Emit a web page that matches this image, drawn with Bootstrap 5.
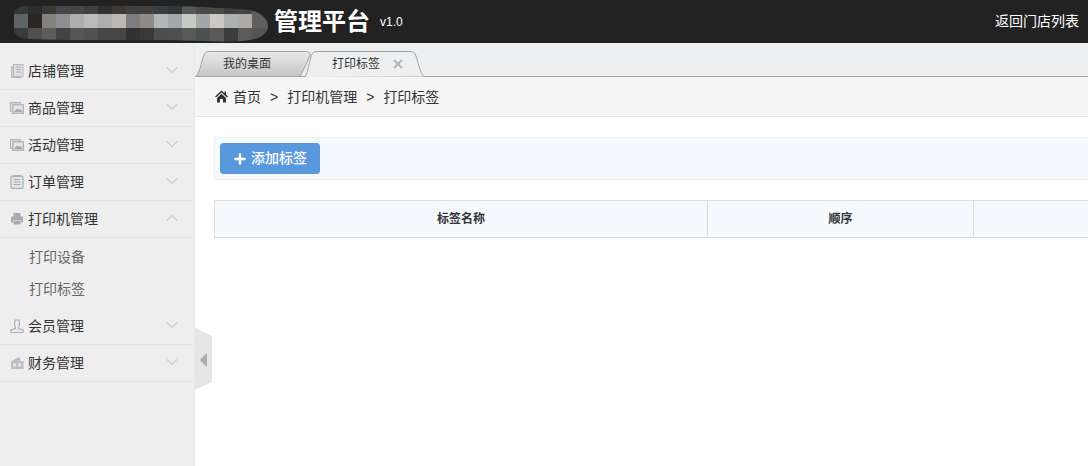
<!DOCTYPE html>
<html lang="zh-CN">
<head>
<meta charset="utf-8">
<title>打印标签</title>
<link href="https://cdn.jsdelivr.net/npm/bootstrap@5.3.0/dist/css/bootstrap.min.css" rel="stylesheet">
<style>
html,body{height:100%;overflow:hidden}
body{font-family:"Liberation Sans","Noto Sans CJK SC",sans-serif;font-size:14px;color:#333;background:#fff}
.shell{width:1088px;height:466px;overflow:hidden;position:relative}
.topbar{height:43px;background:#222;color:#fff}
.logo-mosaic{display:block;width:254px;height:36px;margin-left:14px;margin-top:6px;flex:none;align-self:flex-start}
.brand-name{font-size:24px;font-weight:700;margin-left:6px;line-height:1;color:#fff}
.brand-ver{font-size:12px;margin-left:10px;color:#fff}
.back-link{margin-left:auto;margin-right:9px;color:#fff;text-decoration:none;font-size:14px}
.work{height:423px}
.side{width:195px;flex:none;background:#eee;padding-top:10px;border-right:1px solid #e8e8e8}
.side-row{height:37px;border-bottom:1px solid #e3e3e3;padding-left:10px;padding-right:16px;color:#333;text-decoration:none}
.side-ico{width:14px;height:14px;flex:none;margin-right:4px;display:block}
.side-chev{width:12px;height:8px;margin-left:auto;margin-top:-2px;display:block}
.side-sub{height:32px;padding-left:29px;color:#666;text-decoration:none}
.sub-list{padding-top:3px;padding-bottom:3px}
.side-flap{position:absolute;left:195px;top:328px;width:17px;height:62px;background:#e5e5e5;clip-path:polygon(0 0,100% 8px,100% 54px,0 100%)}
.side-flap::after{content:"";position:absolute;left:5px;top:25px;border-style:solid;border-width:7px 7px 7px 0;border-color:transparent #aaa transparent transparent}
.main-pane{flex:1 1 auto;min-width:0;overflow:hidden}
.tabs-bar{height:34px;background:#eeeff1;border-bottom:1px solid #a3a3a3;position:relative}
.tab-shape{position:absolute;left:0;top:0;width:240px;height:34px;display:block}
.tab-label{position:absolute;top:13px;font-size:12px;line-height:16px;color:#333}
.tab-one{left:28px}
.tab-two{left:137px}
.tab-x{position:absolute;left:197px;top:15px;width:12px;height:12px;display:block}
.crumb-bar{height:40px;background:#f5f5f5;border-bottom:1px solid #e5e5e5;padding-left:20px;padding-top:2px}
.crumb-home{width:13px;height:13px;margin-right:5px;margin-top:-2px;display:block}
.crumb-bar .breadcrumb{--bs-breadcrumb-divider:">";--bs-breadcrumb-margin-bottom:0;--bs-breadcrumb-item-padding-x:9px;--bs-breadcrumb-divider-color:#333;--bs-breadcrumb-item-active-color:#333;font-size:14px}
.page-body{width:1200px;padding:20px 0 0 19px}
.tool-box{background:#f5fafe;border:1px solid #eee;padding:5px;margin-bottom:20px}
.add-btn{--bs-btn-bg:#5a98de;--bs-btn-border-color:#5a98de;--bs-btn-color:#fff;--bs-btn-hover-bg:#5a98de;--bs-btn-hover-border-color:#5a98de;--bs-btn-hover-color:#fff;--bs-btn-border-radius:3px;width:100px;height:31px;padding:0 0 0 13px;font-size:14px;line-height:29px;font-weight:500}
.add-ico{width:12px;height:12px;margin-right:5px;display:block}
.head-table{table-layout:fixed;border-color:#ddd;margin:0;--bs-table-bg:#f5fafe;--bs-table-border-color:#ddd;--bs-table-color:#333}
.head-table th{height:37px;padding:0;font-size:12px;font-weight:700;text-align:center;vertical-align:middle;background:#f5fafe;border:1px solid #ddd;color:#333}
.w-name{width:493px}
.w-order{width:266px}
</style>
</head>
<body>
<div class="shell">
  <header class="topbar d-flex align-items-center">
    <svg class="logo-mosaic" viewBox="0 0 254 36" xmlns="http://www.w3.org/2000/svg" aria-hidden="true">
      <defs><clipPath id="lc"><path d="M10 0H150C175 0 190 1 205 2C225 3 240 3 246 8C252 12 254 16 254 20C254 27 248 32 236 34C225 36 205 36 190 35C150 33 60 35 12 33C3 31 0 28 0 22V10C0 4 4 0 10 0Z"/></clipPath></defs>
      <g clip-path="url(#lc)" shape-rendering="crispEdges">
        <g>
          <rect x="0" y="0" width="14" height="8" fill="#33383a"/><rect x="14" y="0" width="14" height="8" fill="#2e2c2a"/><rect x="28" y="0" width="14" height="8" fill="#393836"/><rect x="42" y="0" width="14" height="8" fill="#45474a"/><rect x="56" y="0" width="14" height="8" fill="#484645"/><rect x="70" y="0" width="14" height="8" fill="#3f4042"/><rect x="84" y="0" width="14" height="8" fill="#2e3130"/><rect x="98" y="0" width="14" height="8" fill="#3b3836"/><rect x="112" y="0" width="14" height="8" fill="#3f4141"/><rect x="126" y="0" width="14" height="8" fill="#434040"/><rect x="140" y="0" width="14" height="8" fill="#3a3d40"/><rect x="154" y="0" width="14" height="8" fill="#333537"/><rect x="168" y="0" width="14" height="8" fill="#55575a"/><rect x="182" y="0" width="14" height="8" fill="#4a4a4a"/><rect x="196" y="0" width="14" height="8" fill="#4b4946"/><rect x="210" y="0" width="14" height="8" fill="#3f4040"/><rect x="224" y="0" width="14" height="8" fill="#464442"/><rect x="238" y="0" width="16" height="8" fill="#5c5d5b"/>
        </g>
        <g>
          <rect x="0" y="8" width="14" height="14" fill="#5d6468"/><rect x="14" y="8" width="14" height="14" fill="#2a2623"/><rect x="28" y="8" width="14" height="14" fill="#82837c"/><rect x="42" y="8" width="14" height="14" fill="#8b8e92"/><rect x="56" y="8" width="14" height="14" fill="#aeaeae"/><rect x="70" y="8" width="14" height="14" fill="#bcbabc"/><rect x="84" y="8" width="14" height="14" fill="#aeadae"/><rect x="98" y="8" width="14" height="14" fill="#bbb8b5"/><rect x="112" y="8" width="14" height="14" fill="#7d7e80"/><rect x="126" y="8" width="14" height="14" fill="#918b86"/><rect x="140" y="8" width="14" height="14" fill="#b2b6ba"/><rect x="154" y="8" width="14" height="14" fill="#a4a8ab"/><rect x="168" y="8" width="14" height="14" fill="#c3ccc3"/><rect x="182" y="8" width="14" height="14" fill="#a4a6a8"/><rect x="196" y="8" width="14" height="14" fill="#ccc9c5"/><rect x="210" y="8" width="14" height="14" fill="#adb2b0"/><rect x="224" y="8" width="14" height="14" fill="#aeaaa6"/><rect x="238" y="8" width="16" height="14" fill="#5f605e"/>
        </g>
        <g>
          <rect x="0" y="22" width="14" height="14" fill="#363c40"/><rect x="14" y="22" width="14" height="14" fill="#4f4f4f"/><rect x="28" y="22" width="14" height="14" fill="#5c5c5c"/><rect x="42" y="22" width="14" height="14" fill="#434341"/><rect x="56" y="22" width="14" height="14" fill="#555555"/><rect x="70" y="22" width="14" height="14" fill="#525052"/><rect x="84" y="22" width="14" height="14" fill="#484647"/><rect x="98" y="22" width="14" height="14" fill="#474546"/><rect x="112" y="22" width="14" height="14" fill="#333134"/><rect x="126" y="22" width="14" height="14" fill="#3a3837"/><rect x="140" y="22" width="14" height="14" fill="#4c4f50"/><rect x="154" y="22" width="14" height="14" fill="#4d4f51"/><rect x="168" y="22" width="14" height="14" fill="#565a5a"/><rect x="182" y="22" width="14" height="14" fill="#4f5050"/><rect x="196" y="22" width="14" height="14" fill="#5a5957"/><rect x="210" y="22" width="14" height="14" fill="#3e3d3b"/><rect x="224" y="22" width="14" height="14" fill="#5a5a5a"/><rect x="238" y="22" width="16" height="14" fill="#555653"/>
        </g>
      </g>
    </svg>
    <span class="brand-name">管理平台</span>
    <span class="brand-ver">v1.0</span>
    <a class="back-link" href="#">返回门店列表</a>
  </header>

  <div class="work d-flex">
    <aside class="side">
      <nav class="d-flex flex-column">
        <a class="side-row d-flex align-items-center" href="#">
          <svg class="side-ico" viewBox="0 0 14 14" aria-hidden="true"><path d="M3.500 2.500H1.500V13.500H11V12.500" fill="#d0d2d6" stroke="#b5b8bd"/><rect x="3.500" y="0.500" width="9.500" height="12" fill="#dfe0e3" stroke="#b5b8bd"/><path d="M6 3H11M6 5.500H11M6 8H11" stroke="#aeb1b7" stroke-width="1.200"/></svg>
          店铺管理
          <svg class="side-chev" viewBox="0 0 12 8" aria-hidden="true"><path d="M1 1.500L6 6.500L11 1.500" fill="none" stroke="#ccc" stroke-width="1.200"/></svg>
        </a>
        <a class="side-row d-flex align-items-center" href="#">
          <svg class="side-ico" viewBox="0 0 14 14" aria-hidden="true"><path d="M0 1H11V3H14V13H2V11H0Z" fill="#b4b7bc"/><rect x="3.500" y="4.500" width="9" height="7" fill="#e4e5e7"/><path d="M1 2.500H10V3H2V10H1Z" fill="#e4e5e7"/><path d="M4 11L7 7.500L9 9L10.500 8L12.500 11Z" fill="#a6a9af"/></svg>
          商品管理
          <svg class="side-chev" viewBox="0 0 12 8" aria-hidden="true"><path d="M1 1.500L6 6.500L11 1.500" fill="none" stroke="#ccc" stroke-width="1.200"/></svg>
        </a>
        <a class="side-row d-flex align-items-center" href="#">
          <svg class="side-ico" viewBox="0 0 14 14" aria-hidden="true"><path d="M0 1H11V3H14V13H2V11H0Z" fill="#b4b7bc"/><rect x="3.500" y="4.500" width="9" height="7" fill="#e4e5e7"/><path d="M1 2.500H10V3H2V10H1Z" fill="#e4e5e7"/><path d="M4 11L7 7.500L9 9L10.500 8L12.500 11Z" fill="#a6a9af"/></svg>
          活动管理
          <svg class="side-chev" viewBox="0 0 12 8" aria-hidden="true"><path d="M1 1.500L6 6.500L11 1.500" fill="none" stroke="#ccc" stroke-width="1.200"/></svg>
        </a>
        <a class="side-row d-flex align-items-center" href="#">
          <svg class="side-ico" viewBox="0 0 14 14" aria-hidden="true"><rect x="1" y="1" width="12" height="12.500" rx="1.500" fill="#e6e7e9" stroke="#aeb1b6" stroke-width="1.300"/><path d="M3.500 4.500H10.500M3.500 7H10.500M3.500 9.500H10.500" stroke="#a6a9af"/><path d="M4 1H10" stroke="#a6a9af" stroke-width="1.500"/></svg>
          订单管理
          <svg class="side-chev" viewBox="0 0 12 8" aria-hidden="true"><path d="M1 1.500L6 6.500L11 1.500" fill="none" stroke="#ccc" stroke-width="1.200"/></svg>
        </a>
        <a class="side-row d-flex align-items-center" href="#">
          <svg class="side-ico" viewBox="0 0 14 14" aria-hidden="true"><path d="M3.500 1H10.500V5H3.500Z" fill="#a8abb1"/><path d="M1 5.500Q1 4.500 2 4.500H12Q13 4.500 13 5.500V10.500H11V8.500H3V10.500H1Z" fill="#a8abb1"/><rect x="3.500" y="9" width="7" height="3.500" fill="#a8abb1"/></svg>
          打印机管理
          <svg class="side-chev" viewBox="0 0 12 8" aria-hidden="true"><path d="M1 6.500L6 1.500L11 6.500" fill="none" stroke="#ccc" stroke-width="1.200"/></svg>
        </a>
        <div class="sub-list d-flex flex-column">
          <a class="side-sub d-flex align-items-center" href="#">打印设备</a>
          <a class="side-sub d-flex align-items-center" href="#">打印标签</a>
        </div>
        <a class="side-row d-flex align-items-center" href="#">
          <svg class="side-ico" viewBox="0 0 14 14" aria-hidden="true"><path d="M5 1H9L9.500 6L8.500 8.500V9.500L13 11V13.500H1V11L5.500 9.500V8.500L4.500 6Z" fill="none" stroke="#aeb1b6" stroke-width="1.200"/></svg>
          会员管理
          <svg class="side-chev" viewBox="0 0 12 8" aria-hidden="true"><path d="M1 1.500L6 6.500L11 1.500" fill="none" stroke="#ccc" stroke-width="1.200"/></svg>
        </a>
        <a class="side-row d-flex align-items-center" href="#">
          <svg class="side-ico" viewBox="0 0 14 14" aria-hidden="true"><path d="M1 5.500L9 1L10.500 4.500Z" fill="#b4b7bc"/><rect x="1" y="5" width="12.500" height="8" fill="#bcbfc3"/><path d="M3 7.500H6V10.500H3ZM8 7.500H11V10.500H8Z" fill="#e6e7e9"/></svg>
          财务管理
          <svg class="side-chev" viewBox="0 0 12 8" aria-hidden="true"><path d="M1 1.500L6 6.500L11 1.500" fill="none" stroke="#ccc" stroke-width="1.200"/></svg>
        </a>
      </nav>
    </aside>

    <main class="main-pane">
      <div class="tabs-bar">
        <svg class="tab-shape" viewBox="0 0 240 34" aria-hidden="true">
          <defs><linearGradient id="tg" x1="0" y1="0" x2="0" y2="1"><stop offset="0" stop-color="#e9e9e9"/><stop offset="1" stop-color="#c6c6c8"/></linearGradient></defs>
          <path d="M1 33.500C5 30 7 15 9.500 11C11 8.700 12 8.500 15 8.500H110C114 8.500 115.500 10 115 12C113 18 109 26 105 33.500Z" fill="url(#tg)" stroke="#a3a3a3"/>
          <path d="M110 34C113 30 115 14 117 11C119 8.500 120 8.500 123 8.500H216C219 8.500 220 10 221 13C223 20 225 27 227 31C228 33 229 33.500 231 33.500" fill="#eeeff1" stroke="#a3a3a3"/>
        </svg>
        <span class="tab-label tab-one">我的桌面</span>
        <span class="tab-label tab-two">打印标签</span>
        <svg class="tab-x" viewBox="0 0 12 12" aria-hidden="true"><path d="M2 2L10 10M10 2L2 10" stroke="#b4b4b4" stroke-width="2"/></svg>
      </div>
      <div class="crumb-bar d-flex align-items-center">
        <svg class="crumb-home" viewBox="0 0 13 13" aria-hidden="true"><path d="M6.500 0.500L9.500 3.200V1.500H11V4.500L13 6.500L12 7.500L6.500 2.500L1 7.500L0 6.500Z" fill="#333"/><path d="M2 8L6.500 3.800L11 8V12.500H8V9H5V12.500H2Z" fill="#333"/></svg>
        <ol class="breadcrumb">
          <li class="breadcrumb-item active">首页</li>
          <li class="breadcrumb-item active">打印机管理</li>
          <li class="breadcrumb-item active">打印标签</li>
        </ol>
      </div>
      <div class="page-body">
        <div class="tool-box d-flex">
          <button type="button" class="btn add-btn d-flex align-items-center">
            <svg class="add-ico" viewBox="0 0 12 12" aria-hidden="true"><path d="M6 0.500V11.500M0.500 6H11.500" stroke="#fff" stroke-width="2.400"/></svg>
            添加标签
          </button>
        </div>
        <table class="table table-bordered head-table">
          <thead>
            <tr><th class="w-name">标签名称</th><th class="w-order">顺序</th><th></th></tr>
          </thead>
        </table>
      </div>
    </main>
  </div>
  <div class="side-flap"></div>
</div>
<script src="https://cdn.jsdelivr.net/npm/bootstrap@5.3.0/dist/js/bootstrap.bundle.min.js"></script>
</body>
</html>
